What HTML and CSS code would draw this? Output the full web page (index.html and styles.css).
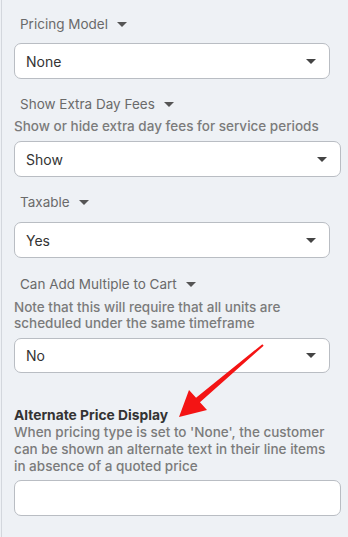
FILE: index.html
```html
<!DOCTYPE html>
<html>
<head>
<meta charset="utf-8">
<link rel="stylesheet" href="styles.css">
</head>
<body>
<div class="panel">
  <div class="field f1">
    <div class="label">Pricing Model <span class="caret"></span></div>
    <div class="select narrow"><span>None</span><span class="caret sel"></span></div>
  </div>
  <div class="field f2">
    <div class="label">Show Extra Day Fees <span class="caret"></span></div>
    <div class="desc">Show or hide extra day fees for service periods</div>
    <div class="select wide s2"><span>Show</span><span class="caret sel"></span></div>
  </div>
  <div class="field f3">
    <div class="label">Taxable <span class="caret"></span></div>
    <div class="select narrow s3"><span>Yes</span><span class="caret sel"></span></div>
  </div>
  <div class="field f4">
    <div class="label">Can Add Multiple to Cart <span class="caret"></span></div>
    <div class="note">Note that this will require that all units are<br>scheduled under the same timeframe</div>
    <div class="select narrow s4"><span>No</span><span class="caret sel"></span></div>
  </div>
  <div class="field f5">
    <div class="heading">Alternate Price Display</div>
    <div class="desc2">When pricing type is set to 'None', the customer<br>can be shown an alternate text in their line items<br>in absence of a quoted price</div>
    <div class="input wide"></div>
  </div>
  <svg class="arrow" width="348" height="537" viewBox="0 0 348 537">
    <polygon fill="#f41414" points="179,417 189,390 196.05,397.72 262.35,344.24 263.65,345.76 199.95,402.28 207,410"/>
  </svg>
</div>
</body>
</html>
```
FILE: styles.css
```css
html, body {
  margin: 0;
  padding: 0;
  background: #eef1f5;
}
body {
  width: 348px;
  height: 537px;
  overflow: hidden;
  font-family: Inter, "Noto Sans", sans-serif;
}
.panel {
  position: relative;
  height: 537px;
  box-sizing: border-box;
  margin-left: 1px;
  border-left: 1px solid #d3d7dd;
  padding: 14px 0 0 12px;
}
.label {
  height: 20px;
  line-height: 20px;
  font-size: 13.5px;
  color: #6a6a6a;
  padding-left: 6px;
  display: flex;
  align-items: center;
}
.caret {
  display: inline-block;
  width: 0;
  height: 0;
  border-left: 5px solid transparent;
  border-right: 5px solid transparent;
  border-top: 5px solid #555;
  margin-left: 9px;
}
.select, .input {
  box-sizing: border-box;
  height: 36px;
  background: #fff;
  border: 1.5px solid #b9bdc3;
  border-radius: 7px;
  display: flex;
  align-items: center;
  justify-content: space-between;
  padding: 0 13px 0 11px;
  font-size: 14px;
  color: #333;
  margin-top: 9px;
}
.narrow { width: 316px; }
.wide { width: 327px; }
.caret.sel { margin-left: 0; border-top-color: #444; }
.f2 { margin-top: 15px; }
.f3 { margin-top: 15px; }
.f4 { margin-top: 16px; }
.f5 { margin-top: 34px; }
.desc {
  margin-top: 4px;
  font-size: 13.5px;
  line-height: 17px;
  font-weight: 500;
  color: #7b7b7b;
}
.s2 { margin-top: 6px; }
.s3 { margin-top: 10px; }
.note {
  margin-top: 5px;
  font-size: 13.5px;
  line-height: 16px;
  font-weight: 500;
  color: #7b7b7b;
}
.s4 { margin-top: 7px; height: 35px; }
.heading {
  font-size: 13.8px;
  line-height: 17px;
  font-weight: 700;
  color: #333;
}
.desc2 {
  font-size: 13.5px;
  line-height: 17px;
  font-weight: 500;
  color: #7b7b7b;
}
.input { margin-top: 5px; }
.arrow {
  position: absolute;
  left: -2px;
  top: 0;
  pointer-events: none;
}
```
